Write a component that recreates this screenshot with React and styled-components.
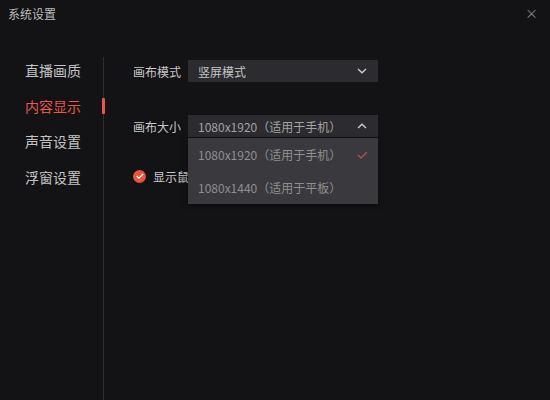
import React from "react";
import styled, { createGlobalStyle } from "styled-components";

const Global = createGlobalStyle`
  html, body { margin: 0; padding: 0; background: #131215; }
  * { box-sizing: border-box; }
  body { font-family: "Noto Sans CJK SC", "Noto Sans", sans-serif; }
`;

const Window = styled.div`
  width: 550px;
  height: 400px;
  background: #131215;
  display: flex;
  flex-direction: column;
  overflow: hidden;
`;

const TitleBar = styled.div`
  height: 57px;
  display: flex;
  align-items: flex-start;
  justify-content: space-between;
  padding: 5px 12px 0 8px;
`;

const Title = styled.div`
  font-size: 12px;
  line-height: 18px;
  color: #bdbdbd;
`;

const Close = styled.div`
  color: #8a8a8a;
  font-size: 13px;
  line-height: 16px;
`;

const Body = styled.div`
  flex: 1;
  display: flex;
`;

const Sidebar = styled.div`
  width: 104px;
  border-right: 1px solid #2f2e32;
  display: flex;
  flex-direction: column;
  gap: 11.7px;
  padding-top: 1px;
`;

const NavItem = styled.div`
  position: relative;
  height: 24px;
  line-height: 24px;
  padding-left: 25px;
  font-size: 14px;
  color: ${(p) => (p.$active ? "#e8574b" : "#c4c4c4")};
  &::after {
    content: "";
    display: ${(p) => (p.$active ? "block" : "none")};
    position: absolute;
    right: -2px;
    top: 4px;
    width: 3px;
    height: 16px;
    background: #e8574b;
    border-radius: 1px;
  }
`;

const Content = styled.div`
  flex: 1;
  padding: 3px 0 0 29px;
  display: flex;
  flex-direction: column;
`;

const Row = styled.div`
  display: flex;
  align-items: center;
  gap: 7px;
  margin-bottom: ${(p) => p.$mb || 0}px;
  position: relative;
`;

const Label = styled.div`
  width: 48px;
  font-size: 12px;
  color: #c8c8c8;
  white-space: nowrap;
`;

const SelectWrap = styled.div`
  position: relative;
  width: 190px;
`;

const Select = styled.div`
  height: 22px;
  background: #2c2b2f;
  display: flex;
  align-items: center;
  justify-content: space-between;
  padding: 0 10px 0 10px;
  font-size: 12px;
  color: ${(p) => (p.$muted ? "#a3a3a3" : "#c4c4c4")};
`;

const Menu = styled.div`
  position: absolute;
  left: 0;
  top: 23px;
  width: 190px;
  background: #3a393d;
  display: flex;
  flex-direction: column;
  z-index: 5;
  box-shadow: 0 2px 6px rgba(0,0,0,0.4);
`;

const MenuItem = styled.div`
  height: 33px;
  display: flex;
  align-items: center;
  justify-content: space-between;
  padding: 0 10px;
  font-size: 12px;
  color: #8f8f8f;
`;

const CheckRow = styled.div`
  display: flex;
  align-items: center;
  gap: 7px;
  height: 22px;
`;

const Circle = styled.div`
  width: 13px;
  height: 13px;
  border-radius: 50%;
  background: #e5553f;
  display: flex;
  align-items: center;
  justify-content: center;
`;

const CheckText = styled.div`
  font-size: 12px;
  color: #c8c8c8;
  white-space: nowrap;
`;

const Chevron = ({ up }) => (
  <svg width="10" height="6" viewBox="0 0 10 6" style={{ marginRight: 1 }}>
    <path
      d={up ? "M1 5 L5 1.2 L9 5" : "M1 1 L5 4.8 L9 1"}
      fill="none"
      stroke="#d0d0d0"
      strokeWidth="1.3"
    />
  </svg>
);

const Tick = ({ color, w = 11, h = 8, sw = 1.4 }) => (
  <svg width={w} height={h} viewBox="0 0 11 8">
    <path d="M1 4 L4 7 L10 1" fill="none" stroke={color} strokeWidth={sw} />
  </svg>
);

export default function App() {
  return (
    <Window>
      <Global />
      <TitleBar>
        <Title>系统设置</Title>
        <Close>×</Close>
      </TitleBar>
      <Body>
        <Sidebar>
          <NavItem>直播画质</NavItem>
          <NavItem $active>内容显示</NavItem>
          <NavItem>声音设置</NavItem>
          <NavItem>浮窗设置</NavItem>
        </Sidebar>
        <Content>
          <Row $mb={33}>
            <Label>画布模式</Label>
            <SelectWrap>
              <Select>
                <span>竖屏模式</span>
                <Chevron />
              </Select>
            </SelectWrap>
          </Row>
          <Row $mb={28}>
            <Label>画布大小</Label>
            <SelectWrap>
              <Select $muted>
                <span>1080x1920（适用于手机）</span>
                <Chevron up />
              </Select>
              <Menu>
                <MenuItem>
                  <span>1080x1920（适用于手机）</span>
                  <Tick color="#a2564c" />
                </MenuItem>
                <MenuItem>
                  <span>1080x1440（适用于平板）</span>
                </MenuItem>
              </Menu>
            </SelectWrap>
          </Row>
          <CheckRow>
            <Circle>
              <Tick color="#ffffff" w={8} h={6} sw={1.6} />
            </Circle>
            <CheckText>显示鼠标</CheckText>
          </CheckRow>
        </Content>
      </Body>
    </Window>
  );
}
